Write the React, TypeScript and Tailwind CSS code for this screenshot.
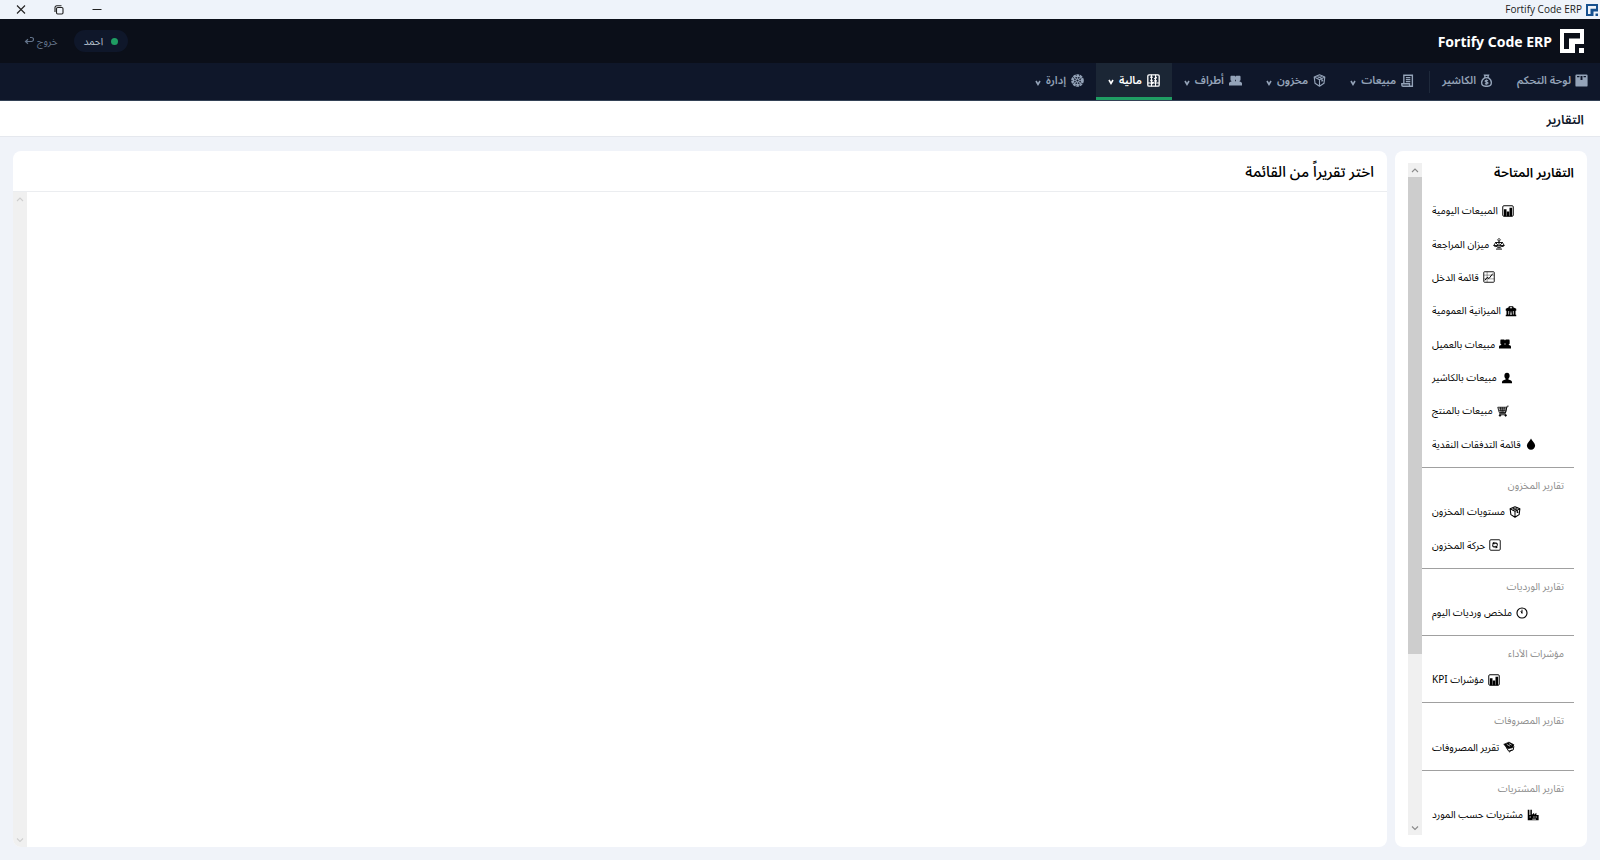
import React from "react";

type IconName =
  | "dashboard" | "moneybag" | "receipt" | "box" | "people" | "abacus" | "gear"
  | "bars" | "scale" | "trend" | "bank" | "person" | "cart" | "drop" | "refresh"
  | "clock" | "spend" | "factory";

const drawings: Record<IconName, React.ReactNode> = {
  dashboard: (
    <path fill="currentColor" fillRule="evenodd" d="M2 .5h12a1.500 1.500 0 0 1 1.500 1.500v12a1.500 1.500 0 0 1-1.500 1.500H2a1.500 1.500 0 0 1-1.500-1.500V2A1.500 1.500 0 0 1 2 .5zM2.500 2.500V4h3V2.500zM6.800 2.500v5h2.400v-5zM10.500 2.500V4h3V2.500z" />
  ),
  moneybag: (
    <g fill="none" stroke="currentColor" strokeWidth="1.700">
      <path d="M5.500 1.500h5L9.500 4.500h-3z" />
      <path d="M6 4.500C3.500 6 2 8 2 10.500c0 3 2 4.500 4.500 4.500h3c2.500 0 4.500-1.500 4.500-4.500 0-2.500-1.500-4.500-4-6z" />
      <path d="M9.800 8.200C8.500 7.300 6.300 7.700 6.300 8.900c0 1.500 3.600.7 3.600 2.300 0 1.200-2.400 1.500-3.800.5M8 6.800v6.400" strokeWidth="1.400" />
    </g>
  ),
  receipt: (
    <g fill="none" stroke="currentColor" strokeWidth="1.700">
      <path d="M3.500 11.500V1.500H14V15H2.500c-.8 0-1.500-.7-1.500-1.500V12h9.500v3" />
      <path d="M6 4.500h5.500M6 7h5.500M6 9.500h5.500" strokeWidth="1.600" />
    </g>
  ),
  box: (
    <g fill="none" stroke="currentColor" strokeWidth="1.400" strokeLinejoin="round">
      <path d="M8 1l6.500 2.800L13.500 11.500 8 15l-5.500-3.500L1.500 3.800zM1.500 3.800L8 7l6.500-3.200M8 7v8M4.500 2.500L11 5.500v3.200l1.500-.8" />
      <path d="M11.500 2.500L5 5.500" strokeWidth="1" />
    </g>
  ),
  people: (
    <path fill="currentColor" d="M3 2h3.500c.8 0 1.200.6 1.500 1.300C8.300 2.600 8.700 2 9.500 2H13c.8 0 1.200.7 1.200 1.500V7c0 .8-.7 1.200-1.200 1.500v.8c1.700.4 3 1 3 2.200V14H0v-2.500c0-1.200 1.300-1.800 3-2.200v-.8C2.500 8.200 1.800 7.800 1.800 7V3.500C1.800 2.700 2.200 2 3 2zM7.500 7v2h1V7z" fillRule="evenodd" />
  ),
  abacus: (
    <g fill="none" stroke="currentColor" strokeWidth="1.600">
      <rect x="1" y="1" width="14" height="14" rx="1.500" />
      <path d="M5.500 1v14M10.500 1v14M1 11h14" strokeWidth="1.300" />
      <path d="M4 4h3M9 6l3-2M4 8h3M9 8.500h3M5 12.800l3-3" strokeWidth="2" />
    </g>
  ),
  gear: (
    <g fill="none" stroke="currentColor">
      <circle cx="8" cy="8" r="6.700" strokeWidth="2.200" strokeDasharray="3.400 .81" />
      <circle cx="8" cy="8" r="5" strokeWidth="1.600" />
      <circle cx="8" cy="8" r="2" strokeWidth="1.400" />
      <path d="M8 2.500V6M8 10v3.500M2.500 8H6M10 8h3.500M4.100 4.100l2.500 2.500M9.400 9.400l2.500 2.500M11.900 4.100L9.400 6.600M6.600 9.400l-2.500 2.500" />
    </g>
  ),
  bars: (
    <g>
      <rect x="1" y="1" width="14" height="14" rx="1.500" fill="none" stroke="currentColor" strokeWidth="1.300" />
      <path fill="currentColor" d="M2.500 5.500h3.500V15H2.500zM6.500 8.500h3V15h-3zM10 3.500h3.500V15H10z" />
    </g>
  ),
  scale: (
    <g fill="none" stroke="currentColor" strokeWidth="1.200">
      <path d="M8 .5l1.800 2L8 4.500l-1.800-2zM8 4v9M3 6h10M3.500 6L1 10h6zM12.500 6L9 10h6zM1 10c.5 2 5 2 6 0M9 10c.5 2 5 2 6 0M4 14.800h8M5.500 13h5" />
    </g>
  ),
  trend: (
    <g fill="none" stroke="currentColor">
      <rect x="1" y="1" width="14" height="14" rx="1" strokeWidth="1.200" />
      <path d="M1 5.500h14M1 10.500h14M5.500 1v14" strokeWidth=".5" />
      <path d="M2.500 12.500l3-4 2.500 1.500 5-6.500" strokeWidth="1.300" />
    </g>
  ),
  bank: (
    <path fill="currentColor" fillRule="evenodd" d="M5 1.500h6V3l4 2v2.500h-1V13h1v2H1v-2h1V7.500H1V5l4-2zM6.500 3v1.200h3V3zM4.500 8v4.500h1V8zM7 9v1h2V9zM7 11v2h2v-2zM10.500 8v4.500h1V8z" />
  ),
  person: (
    <path fill="currentColor" d="M8 1c2.300 0 3.500 1.600 3.500 3.900 0 1.900-.8 3.300-1.700 4V10c3 .6 4.900 1.600 4.900 3.500V15H1.300v-1.500c0-1.900 1.900-2.900 4.900-3.500V8.900c-.9-.7-1.700-2.100-1.700-4C4.500 2.600 5.700 1 8 1z" />
  ),
  cart: (
    <g fill="none" stroke="currentColor" strokeWidth="1.100">
      <path d="M15.500 1.500h-2L11 11.500H3M1 3h12L11.400 10H3zM2 5.200h10M2.500 7.600h9M4.500 3l1 7M7 3v7M9.700 3L9 10M3 13h9.500" />
      <circle cx="4" cy="14" r="1" fill="currentColor" />
      <circle cx="11.500" cy="14" r="1" fill="currentColor" />
    </g>
  ),
  drop: (
    <path fill="currentColor" d="M8 .5c1.200 3 5.500 6 5.500 9.500a5.500 5.500 0 0 1-11 0C2.500 6.500 6.800 3.500 8 .5z" />
  ),
  refresh: (
    <g fill="none" stroke="currentColor">
      <rect x="1" y="1" width="14" height="14" rx="1.500" strokeWidth="1.200" />
      <path d="M11 9V7a1.500 1.500 0 0 0-1.500-1.500H6M5 7v2A1.500 1.500 0 0 0 6.500 10.500H10" strokeWidth="1.400" />
      <path d="M7 3.500v4L4 5.500zM9 8.500v4l3-2z" fill="currentColor" stroke="none" />
    </g>
  ),
  clock: (
    <g fill="none" stroke="currentColor" strokeWidth="1.500">
      <circle cx="8" cy="8" r="6.700" />
      <path d="M8 3.500V8.500M8 8.500L6.500 5.500" strokeWidth="1.300" />
    </g>
  ),
  spend: (
    <g stroke="currentColor" strokeLinejoin="round">
      <path d="M1 4.500l7-3 6.500 3.500-2 4-5.500 1z" fill="currentColor" />
      <path d="M3.500 7l4 6.500 6-1.500 1-5M5 9.500l6-1.500M8 15l3.500-3" fill="none" strokeWidth="1.300" />
      <path d="M5 4.500l4.500 2.500M8 3.500l3.500 2" stroke="white" strokeWidth=".9" />
    </g>
  ),
  factory: (
    <path fill="currentColor" fillRule="evenodd" d="M1 1h2.200v7H4.500V1h2v6.500L9.500 5v2.500L12.500 5v3h3v7H1zM8.500 10v1.300h1.500V10zM11.500 10v1.300H13V10zM3.500 10v1.300H5V10zM7 13v1h5v-1z" />
  ),
};

function Icon({ name, className = "size-3" }: { name: IconName; className?: string }) {
  return (
    <svg viewBox="0 0 16 16" className={`shrink-0 ${className}`} aria-hidden="true">
      {drawings[name]}
    </svg>
  );
}

function Logo({ className }: { className: string }) {
  return (
    <svg viewBox="0 0 24 24" className={className} aria-hidden="true">
      <path fill="currentColor" fillRule="evenodd" d="M0 0h24v15h-9v9H0zM4 4v16h5V9.500h11V4z" />
      <path fill="currentColor" d="M19 19h5v5h-5z" />
    </svg>
  );
}

const menus: { label: string; icon: IconName; active?: boolean }[] = [
  { label: "مبيعات", icon: "receipt" },
  { label: "مخزون", icon: "box" },
  { label: "أطراف", icon: "people" },
  { label: "مالية", icon: "abacus", active: true },
  { label: "إدارة", icon: "gear" },
];

type Section = { title?: string; height: string; items: { label: string; icon: IconName }[] };

const sections: Section[] = [
  {
    height: "h-[267px]",
    items: [
      { label: "المبيعات اليومية", icon: "bars" },
      { label: "ميزان المراجعة", icon: "scale" },
      { label: "قائمة الدخل", icon: "trend" },
      { label: "الميزانية العمومية", icon: "bank" },
      { label: "مبيعات بالعميل", icon: "people" },
      { label: "مبيعات بالكاشير", icon: "person" },
      { label: "مبيعات بالمنتج", icon: "cart" },
      { label: "قائمة التدفقات النقدية", icon: "drop" },
    ],
  },
  {
    title: "تقارير المخزون",
    height: "h-[67px]",
    items: [
      { label: "مستويات المخزون", icon: "box" },
      { label: "حركة المخزون", icon: "refresh" },
    ],
  },
  { title: "تقارير الورديات", height: "h-[33px]", items: [{ label: "ملخص ورديات اليوم", icon: "clock" }] },
  { title: "مؤشرات الأداء", height: "h-[33px]", items: [{ label: "مؤشرات KPI", icon: "bars" }] },
  { title: "تقارير المصروفات", height: "h-[34px]", items: [{ label: "تقرير المصروفات", icon: "spend" }] },
  { title: "تقارير المشتريات", height: "h-[33px]", items: [{ label: "مشتريات حسب المورد", icon: "factory" }] },
];

function Arrow({ down = false }: { down?: boolean }) {
  return (
    <svg viewBox="0 0 14 14" className="size-3.5" fill="none" stroke="currentColor" strokeWidth="1.100" aria-hidden="true">
      <path d={down ? "M4 5.500l3 3L10 5.500" : "M4 9l3-3L10 9"} />
    </svg>
  );
}

export default function App() {
  return (
    <div dir="rtl" className="flex h-screen flex-col overflow-hidden bg-[#f0f3f9] font-['Noto_Sans','Noto_Sans_Arabic','DejaVu_Sans',sans-serif] text-black">
      <div className="flex h-[19px] shrink-0 items-center justify-between bg-[#eef3fa] pr-0.5 pl-[15px]">
        <div className="flex items-center gap-1 font-['Open_Sans',sans-serif] text-[10px] text-[#1b1b1b]">
          <Logo className="size-3 text-[#15508f]" />
          <span dir="ltr">Fortify Code ERP</span>
        </div>
        <div className="flex items-center gap-[26px] text-[#222]">
          <button aria-label="تصغير" className="flex w-3 justify-center">
            <svg viewBox="0 0 12 12" className="size-3" stroke="currentColor"><path d="M1.500 5.500h9" /></svg>
          </button>
          <button aria-label="استعادة" className="flex w-3 justify-center">
            <svg viewBox="0 0 12 12" className="size-3" fill="none" stroke="currentColor" strokeWidth="1.100">
              <rect x="3.500" y="3.500" width="6.500" height="6.500" rx="1.200" />
              <path d="M2 8V3.500A1.700 1.700 0 0 1 3.700 1.800H8.500" />
            </svg>
          </button>
          <button aria-label="إغلاق" className="flex w-3 justify-center">
            <svg viewBox="0 0 12 12" className="size-3" stroke="currentColor" strokeWidth="1.100"><path d="M2 1.500l8 8M10 1.500l-8 8" /></svg>
          </button>
        </div>
      </div>

      <header className="flex h-11 shrink-0 items-center justify-between bg-[#0b0f19] px-4">
        <div className="flex items-center gap-2 text-white">
          <Logo className="size-6" />
          <h1 dir="ltr" className="text-[14px] font-bold">Fortify Code ERP</h1>
        </div>
        <div className="flex items-center gap-2 text-[10px]">
          <span className="flex h-[22px] items-center gap-2 rounded-full bg-[#0f172a] px-2.5 text-[#b6c0ce]">
            <span className="size-[7px] rounded-full bg-[#1f9d63]" />
            احمد
          </span>
          <button className="flex items-center gap-[3px] px-2 text-[#64748b]">
            خروج
            <svg viewBox="0 0 10 10" className="size-2.5" fill="none" stroke="currentColor" strokeWidth="1.200" aria-hidden="true">
              <path d="M6 1.500h1.500a1.800 1.800 0 0 1 0 4H2M4 3.300L1.500 5.500 4 7.700" />
            </svg>
          </button>
        </div>
      </header>

      <nav className="flex h-[38px] shrink-0 items-stretch border-b border-[#334155] bg-[#0f172a] text-[11px] font-semibold text-[#94a3b8]">
        <a href="#dashboard" className="flex items-center gap-1 px-3 pb-0.5">
          <Icon name="dashboard" className="size-[13px]" />لوحة التحكم
        </a>
        <a href="#cashier" className="flex items-center gap-1 px-3 pb-0.5">
          <Icon name="moneybag" className="size-[13px]" />الكاشير
        </a>
        <span className="mt-2 ml-[3px] h-[22px] w-px bg-[#1e293b]" />
        {menus.map((m) => (
          <button
            key={m.label}
            className={
              m.active
                ? "flex items-center gap-[5px] border-b-[3px] border-[#1f9d63] bg-[#1b2635] px-3 text-white"
                : "flex items-center gap-[5px] px-3 pb-0.5"
            }
          >
            <Icon name={m.icon} className="size-[13px]" />
            {m.label}
            <svg viewBox="0 0 6 12" className="h-3 w-1.5" fill="none" stroke="currentColor" strokeWidth="1.600" aria-hidden="true">
              <path d="M1 6l2 3.500L5 6" />
            </svg>
          </button>
        ))}
      </nav>

      <div className="flex h-9 shrink-0 items-center border-b border-[#e5e8ee] bg-white px-4 pt-0.5">
        <h2 className="text-[13px] font-semibold text-[#0f172a]">التقارير</h2>
      </div>

      <main className="flex min-h-0 flex-1 gap-2 px-[13px] pt-3.5 pb-[13px]">
        <aside className="flex w-48 shrink-0 rounded-lg bg-white px-[13px] py-3">
          <div className="min-w-0 flex-1 overflow-hidden">
            <h3 className="flex h-5 items-center text-[13px] font-semibold">التقارير المتاحة</h3>
            <div className="mt-[11px]">
              {sections.map((s, i) => (
                <section key={i} className={i < sections.length - 1 ? "border-b border-[#a0a0a0] pb-1.5" : ""}>
                  {s.title && (
                    <h4 className="flex h-[27px] items-center px-2.5 pt-[7px] text-[10px] text-[#8c8c8c]">{s.title}</h4>
                  )}
                  <div className={`grid auto-rows-fr ${s.height}`}>
                    {s.items.map((it) => (
                      <button key={it.label} className="flex items-center justify-end gap-1 px-2.5 text-[10px] whitespace-nowrap text-black">
                        <Icon name={it.icon} />
                        {it.label}
                      </button>
                    ))}
                  </div>
                </section>
              ))}
            </div>
          </div>
          <div className="flex w-3.5 shrink-0 flex-col bg-[#f0f0f0] text-[#8a8a8a]" aria-hidden="true">
            <Arrow />
            <div className="min-h-0 flex-1">
              <div className="h-[74%] bg-[#cdcdcd]" />
            </div>
            <Arrow down />
          </div>
        </aside>

        <section className="flex min-w-0 flex-1 flex-col overflow-hidden rounded-lg bg-white">
          <div className="flex h-[41px] shrink-0 items-center border-b border-[#ebedf0] px-[13px]">
            <h3 className="text-[15px] font-medium">اختر تقريراً من القائمة</h3>
          </div>
          <div className="flex flex-1 justify-end">
            <div className="flex w-3.5 flex-col justify-between bg-[#f0f0f0] text-[#cfcfcf]" aria-hidden="true">
              <Arrow />
              <Arrow down />
            </div>
          </div>
        </section>
      </main>
    </div>
  );
}
